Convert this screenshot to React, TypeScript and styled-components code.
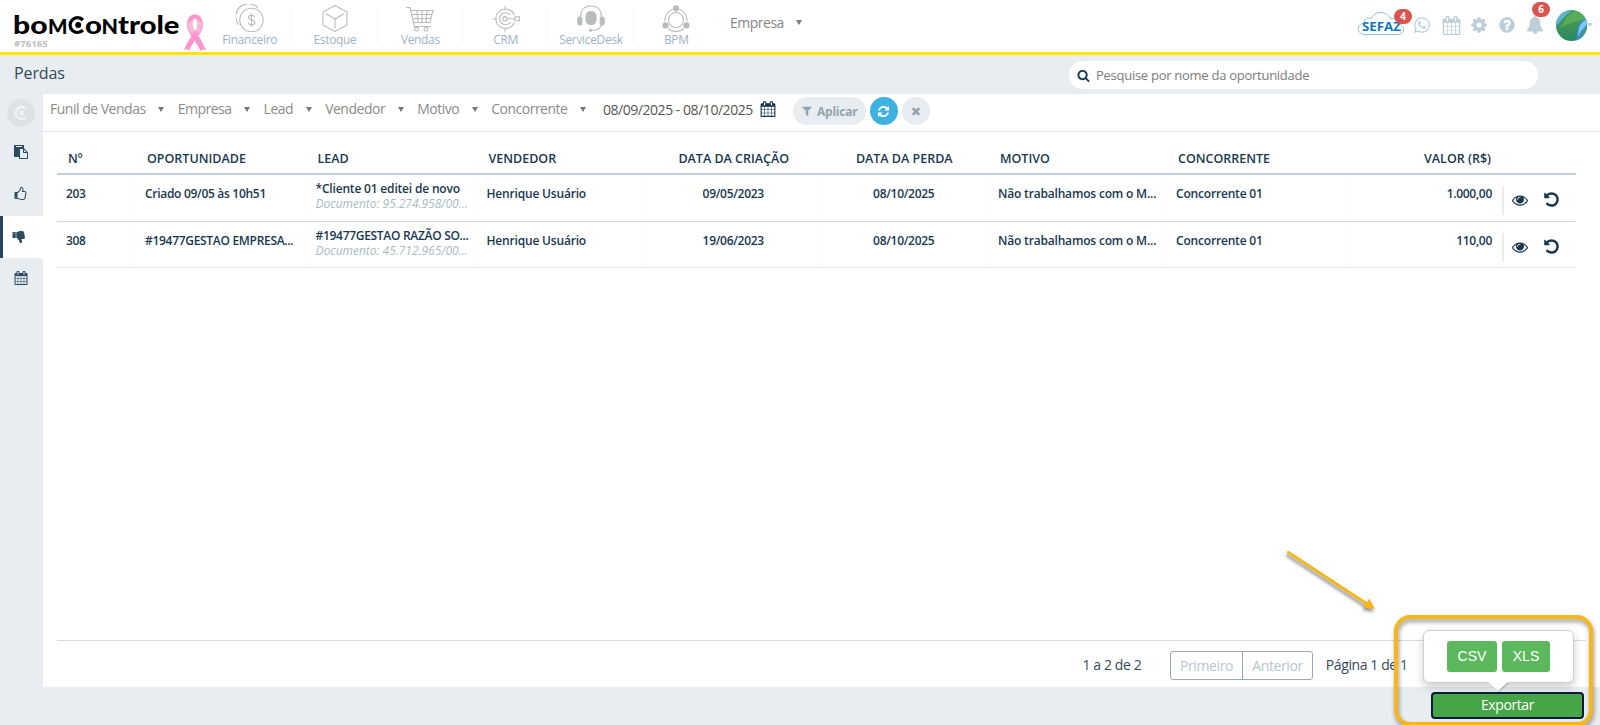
import React from 'react';
import styled, { createGlobalStyle } from 'styled-components';
import { FaWhatsapp } from 'react-icons/fa';

const GlobalStyle = createGlobalStyle`
  *, *::before, *::after { box-sizing: border-box; }
  html, body { margin: 0; padding: 0; }
  body {
    width: 1600px; height: 725px; overflow: hidden;
    background: #e8edf1; color: #17384f;
    font-family: 'Open Sans', 'Noto Sans', sans-serif; font-size: 13px;
  }
  button { font-family: inherit; margin: 0; padding: 0; border: 0; background: none; }
`;

const paths = {
  calendar:
    'M192 1664h288v-288h-288v288zm352 0h320v-288h-320v288zm-352-352h288v-320h-288v320zm352 0h320v-320h-320v320zm-352-384h288v-288h-288v288zm736 736h320v-288h-320v288zm-384-736h320v-288h-320v288zm768 736h288v-288h-288v288zm-384-352h320v-320h-320v320zm-352-864v-288q0-13-9.5-22.5t-22.5-9.5h-64q-13 0-22.5 9.5t-9.5 22.5v288q0 13 9.5 22.5t22.5 9.5h64q13 0 22.5-9.5t9.5-22.5zm736 864h288v-320h-288v320zm-384-384h320v-288h-320v288zm384 0h288v-288h-288v288zm32-480v-288q0-13-9.5-22.5t-22.5-9.5h-64q-13 0-22.5 9.5t-9.5 22.5v288q0 13 9.5 22.5t22.5 9.5h64q13 0 22.5-9.5t9.5-22.5zm384-64v1280q0 52-38 90t-90 38h-1408q-52 0-90-38t-38-90v-1280q0-52 38-90t90-38h128v-96q0-66 47-113t113-47h64q66 0 113 47t47 113v96h384v-96q0-66 47-113t113-47h64q66 0 113 47t47 113v96h128q52 0 90 38t38 90z',
  eye: 'M1664 960q-152-236-381-353 61 104 61 225 0 185-131.5 316.5t-316.5 131.5-316.5-131.5-131.5-316.5q0-121 61-225-229 117-381 353 133 205 333.5 326.5t434.5 121.5 434.5-121.5 333.5-326.5zm-720-384q0-20-14-34t-34-14q-125 0-214.5 89.5t-89.5 214.5q0 20 14 34t34 14 34-14 14-34q0-86 61-147t147-61q20 0 34-14t14-34zm848 384q0 34-20 69-140 230-376.5 368.5t-499.5 138.5-499.5-139-376.5-368q-20-35-20-69t20-69q140-229 376.5-368t499.5-139 499.5 139 376.5 368q20 35 20 69z',
  undo: 'M1664 896q0 156-61 298t-164 245-245 164-298 61q-172 0-327-72.5t-264-204.5q-7-10-6.5-22.5t8.5-20.5l137-138q10-9 25-9 16 2 23 12 73 95 179 147t225 52q104 0 198.5-40.5t163.5-109.5 109.5-163.5 40.5-198.5-40.5-198.5-109.5-163.5-163.5-109.5-198.5-40.5q-98 0-188 35.5t-160 101.5l137 138q31 30 14 69-17 40-59 40h-448q-26 0-45-19t-19-45v-448q0-42 40-59 39-17 69 14l130 129q107-101 244.5-156.5t284.5-55.5q156 0 298 61t245 164 164 245 61 298z',
  refresh:
    'M1639 1056q0 5-1 7-64 268-268 434.5t-478 166.5q-146 0-282.5-55t-243.5-157l-129 129q-19 19-45 19t-45-19-19-45v-448q0-26 19-45t45-19h448q26 0 45 19t19 45-19 45l-137 137q71 66 161 102t187 36q134 0 250-65t186-179q11-17 53-117 8-23 30-23h192q13 0 22.5 9.5t9.5 22.5zm25-800v448q0 26-19 45t-45 19h-448q-26 0-45-19t-19-45 19-45l138-138q-148-137-349-137-134 0-250 65t-186 179q-11 17-53 117-8 23-30 23h-199q-13 0-22.5-9.5t-9.5-22.5v-7q65-268 270-434.5t480-166.5q146 0 284 55.5t245 156.5l130-129q19-19 45-19t45 19 19 45z',
  filter:
    'M1595 295q17 41-14 70l-493 493v742q0 42-39 59-13 5-25 5-27 0-45-19l-256-256q-19-19-19-45v-486l-493-493q-31-29-14-70 17-39 59-39h1280q42 0 59 39z',
  times:
    'M1490 1322q0 40-28 68l-136 136q-28 28-68 28t-68-28l-294-294-294 294q-28 28-68 28t-68-28l-136-136q-28-28-28-68t28-68l294-294-294-294q-28-28-28-68t28-68l136-136q28-28 68-28t68 28l294 294 294-294q28-28 68-28t68 28l136 136q28 28 28 68t-28 68l-294 294 294 294q28 28 28 68z',
  search:
    'M1216 832q0-185-131.5-316.5t-316.5-131.5-316.5 131.5-131.5 316.5 131.5 316.5 316.5 131.5 316.5-131.5 131.5-316.5zm512 832q0 52-38 90t-90 38q-54 0-90-38l-343-342q-179 124-399 124-143 0-273.5-55.5t-225-150-150-225-55.5-273.5 55.5-273.5 150-225 225-150 273.5-55.5 273.5 55.5 225 150 150 225 55.5 273.5q0 220-124 399l343 343q37 37 37 90z',
  cog: 'M1152 896q0-106-75-181t-181-75-181 75-75 181 75 181 181 75 181-75 75-181zm512-109v222q0 12-8 23t-20 13l-185 28q-19 54-39 91 35 50 107 138 10 12 10 25t-9 23q-27 37-99 108t-94 71q-12 0-26-9l-138-108q-44 23-91 38-16 136-29 186-7 28-36 28h-222q-14 0-24.5-8.5t-11.5-21.5l-28-184q-49-16-90-37l-141 107q-10 9-25 9-14 0-25-11-126-114-165-168-7-10-7-23 0-12 8-23 15-21 51-66.5t54-70.5q-27-50-41-99l-183-27q-13-2-21-12.5t-8-23.5v-222q0-12 8-23t19-13l186-28q14-46 39-92-40-57-107-138-10-12-10-24 0-10 9-23 26-36 98.5-107.5t94.5-71.5q13 0 26 10l138 107q44-23 91-38 16-136 29-186 7-28 36-28h222q14 0 24.5 8.5t11.5 21.5l28 184q49 16 90 37l142-107q9-9 24-9 13 0 25 10 129 119 165 170 7 8 7 22 0 12-8 23-15 21-51 66.5t-54 70.5q26 50 41 98l183 28q13 2 21 12.5t8 23.5z',
  question:
    'M1024 1376v-192q0-14-9-23t-23-9h-192q-14 0-23 9t-9 23v192q0 14 9 23t23 9h192q14 0 23-9t9-23zm256-672q0-88-55.5-163t-138.5-116-170-41q-243 0-371 213-15 24 8 42l132 100q7 6 19 6 16 0 25-12 53-68 86-92 34-24 86-24 48 0 85.5 26t37.5 59q0 38-20 61t-68 45q-63 28-115.5 86.5t-52.5 125.5v36q0 14 9 23t23 9h192q14 0 23-9t9-23q0-19 21.5-49.5t54.5-49.5q32-18 49-28.5t46-35 44.5-48 28-60.5 12.5-81zm384 192q0 209-103 385.5t-279.5 279.5-385.5 103-385.5-103-279.5-279.5-103-385.5 103-385.5 279.5-279.5 385.5-103 385.5 103 279.5 279.5 103 385.5z',
  bell: 'M912 1696q0-16-16-16-59 0-101.5-42.5t-42.5-101.5q0-16-16-16t-16 16q0 73 51.5 124.5t124.5 51.5q16 0 16-16zm816-288q0 52-38 90t-90 38h-448q0 106-75 181t-181 75-181-75-75-181h-448q-52 0-90-38t-38-90q50-42 91-88t85-119.5 74.5-158.5 50-206 19.5-260q0-152 117-282.5t307-158.5q-8-19-8-39 0-40 28-68t68-28 68 28 28 68q0 20-8 39 190 28 307 158.5t117 282.5q0 139 19.5 260t50 206 74.5 158.5 85 119.5 91 88z',
  paste:
    'M768 1664h896v-640h-416q-40 0-68-28t-28-68v-416h-384v1152zm256-1440v-64q0-13-9.5-22.5t-22.5-9.5h-704q-13 0-22.5 9.5t-9.5 22.5v64q0 13 9.5 22.5t22.5 9.5h704q13 0 22.5-9.5t9.5-22.5zm256 672h299l-299-299v299zm512 128v672q0 40-28 68t-68 28h-960q-40 0-68-28t-28-68v-160h-544q-40 0-68-28t-28-68v-1344q0-40 28-68t68-28h1088q40 0 68 28t28 68v328q21 13 36 28l408 408q28 28 48 76t20 88z',
  thumbsUp:
    'M320 1344q0-26-19-45t-45-19-45 19-19 45 19 45 45 19 45-19 19-45zm1152-576q0-51-39-89.5t-89-38.5h-352q0-58 48-159.5t48-160.5q0-98-32-145t-128-47q-26 26-38 85t-30.5 125.5-59.5 109.5q-22 23-77 91-4 5-23 30t-31.5 41-34.5 42.5-40 44-38.5 35.5-40 27-35.5 9h-32v640h32q13 0 31.5 3t33 6.5 38 11 35 11.5 35.5 12.5 29 10.5q211 73 342 73h121q192 0 192-167 0-26-5-56 30-16 47.5-52.5t17.5-73.5-18-69q53-50 53-119 0-25-10-55.5t-25-47.5q32-1 53.5-47t21.5-81zm128-1q0 89-49 163 9 33 9 69 0 77-38 144 3 21 3 43 0 101-60 178 1 139-85 219.5t-227 80.5h-129q-96 0-189.5-22.5t-216.5-65.5q-116-40-138-40h-288q-53 0-90.5-37.5t-37.5-90.5v-640q0-53 37.5-90.5t90.5-37.5h274q36-24 137-155 58-75 107-128 24-25 35.5-85.5t30.5-126.5 62-108q39-37 90-37 84 0 151 32.5t102 101.5 35 186q0 93-48 192h176q104 0 180 76t76 179z',
  thumbsDown:
    'M320 576q0 26-19 45t-45 19q-27 0-45.5-19t-18.5-45q0-27 18.5-45.5t45.5-18.5q26 0 45 18.5t19 45.5zm160 512v-640q0-26-19-45t-45-19h-288q-26 0-45 19t-19 45v640q0 26 19 45t45 19h288q26 0 45-19t19-45zm1129-149q55 61 55 149-1 78-57.5 135t-134.5 57h-277q4 14 8 24t11 22 10 18q18 37 27 57t19 58.5 10 76.5q0 24-.5 39t-5 45-12 50-24 45-40 40.5-60 26-82.5 10.5q-26 0-45-19-20-20-34-50t-19.5-52-12.5-61q-9-42-13.5-60.5t-17.5-48.5-31-48q-33-33-101-120-49-64-101-121t-76-59q-25-2-43-20.5t-18-43.5v-641q0-26 19-44.5t45-19.5q35-1 158-44 77-26 120.5-39.5t121.5-29 144-15.5h129q133 2 197 78 58 69 49 181 39 37 54 94 17 61 0 117 46 61 43 137 0 32-15 76z',
};

const IconSvg = styled.svg`
  display: block; flex: none; fill: currentColor; overflow: visible;
`;
const Icon = ({ name, size }: { name: keyof typeof paths; size: number }) => (
  <IconSvg width={size} height={size} viewBox="0 0 1792 1792">
    <path d={paths[name]} />
  </IconSvg>
);

const Page = styled.div`
  position: relative; display: flex; flex-direction: column;
  width: 1600px; height: 725px; overflow: hidden;
`;

/* ---------- top bar ---------- */
const TopBar = styled.header`
  display: flex; align-items: flex-start; height: 55px; flex: none;
  background: #fff; border-bottom: 3px solid #ffe600;
`;
const Brand = styled.div`
  width: 207px; height: 52px; display: flex; align-items: flex-end;
`;
const BrandColumn = styled.div`
  display: flex; flex-direction: column; height: 52px; padding: 6px 0 0 11px; width: 183px; flex: none;
`;
const AccountId = styled.span`
  font-size: 9.5px; line-height: 12px; font-weight: 700; color: #bdbdbd;
  letter-spacing: 0.1px; padding-left: 3px; margin-top: -5px;
`;
const Modules = styled.nav`display: flex; height: 52px;`;
const Module = styled.a`
  width: 85.33px; display: flex; flex-direction: column; align-items: center;
  padding-top: 4px; position: relative; color: #9fb4c2;
  font-size: 12px; line-height: 15px; letter-spacing: -0.33px; white-space: nowrap;
  &:not(:last-child)::after {
    content: ''; position: absolute; right: 0; top: 8px; width: 1px; height: 36px; background: #f4f6f7;
  }
  svg { fill: none; stroke: #b9bcbe; stroke-width: 1.1; }
`;
const CompanyPicker = styled.div`
  display: flex; align-items: center; gap: 12.5px; margin: 12px 0 0 11px; height: 20px;
  color: #868686; font-size: 14px; letter-spacing: -0.49px;
`;
const Caret = styled.i<{ $light?: boolean }>`
  display: block; flex: none; width: 0; height: 0; margin-left: ${p => (p.$light ? -3 : 0)}px;
  border: 3px solid transparent; border-bottom: 0; border-top: ${p => (p.$light ? '4px solid #c3d3dc' : '5px solid #777')};
`;
const Tools = styled.div`
  display: flex; align-items: center; margin-left: auto; height: 50px; color: #bccfd8; padding-right: 7px;
`;
const Tool = styled.span<{ $w: number }>`
  position: relative; display: flex; justify-content: center; width: ${p => p.$w}px;
`;
const Badge = styled.b<{ $left: number; $top: number }>`
  position: absolute; left: ${p => p.$left}px; top: ${p => p.$top}px;
  min-width: 18px; height: 15px; border-radius: 8px; background: #d9534f; color: #fff;
  font-size: 10px; line-height: 15px; text-align: center;
`;

const Logo = () => (
  <svg width="172" height="37" viewBox="-2 -4 172 37" fontFamily="Lato, sans-serif" fontWeight="900">
    <g fontSize="25.5" fill="#000">
      <text x="0" y="23.8" textLength="34.5" lengthAdjust="spacingAndGlyphs">bo</text>
      <text x="35" y="23.8" fontSize="20" textLength="19.5" lengthAdjust="spacingAndGlyphs">M</text>
      <text x="72" y="23.8" textLength="17" lengthAdjust="spacingAndGlyphs">o</text>
      <text x="88.5" y="23.8" fontSize="20" textLength="16.5" lengthAdjust="spacingAndGlyphs">N</text>
      <text x="105" y="23.8" textLength="61.5" lengthAdjust="spacingAndGlyphs">trole</text>
    </g>
    <path d="M69.9 10.1 A7.4 7.4 0 1 0 69.9 20.1" fill="none" stroke="#000" strokeWidth="3.2" />
    <circle cx="65.2" cy="15.1" r="3" fill="#000" />
  </svg>
);

const Ribbon = () => (
  <svg width="24" height="38" viewBox="0 0 24 38">
    <path d="M4 11 C4 3 8 0.5 12 0.5 C16 0.5 20 3 20 11 C20 17 16 21 12 26 L5.5 37 L4.5 35 L1 36 C5 27 9 21 13.5 15 C15 12 15 5 12 4.5 C9 5 9 12 10.5 15 C15 21 19 28 23 36 L19.5 35 L18 37 L12 27 C8 21 4 17 4 11Z" fill="#ff94cf" />
    <path d="M12 27 L7.5 20.5 L11 16 L16.500 23.500 L22.500 36 L19.500 35 L18 37Z" fill="#ff94cf" />
    <path d="M4.5 9 C4.5 15 7 18 9 20 L11.5 16.5 C8.5 12 8.5 7 10.5 5Z M19.5 9 C19.5 15 17 18 15 20 L12.5 16.5 C15.5 12 15.5 7 13.5 5Z" fill="#f9b9dd" />
  </svg>
);

const FinanceIcon = () => (
  <svg width="28" height="28" viewBox="0 0 28 28">
    <circle cx="15.5" cy="16" r="11.7" /><path d="M3 21 A12 12 0 1 1 22 4" />
    <path d="M18.5 13 C18 11.5 17 11.3 15.5 11.3 C13.5 11.3 12.5 12.2 12.5 13.5 C12.5 16.8 18.8 14.8 18.8 18.4 C18.8 20 17.5 20.9 15.5 20.9 C13.7 20.9 12.5 20 12.3 18.5 M15.5 9.3 V23" />
  </svg>
);
const StockIcon = () => (
  <svg width="28" height="28" viewBox="0 0 28 28">
    <path d="M14 1.5 L26 8 V21 L14 27.5 L2 21 V8Z M5 9.8 L14 15 L23 9.8 M14 15 V24.5" />
  </svg>
);
const CartIcon = () => (
  <svg width="28" height="28" viewBox="0 0 28 28">
    <path d="M0 3.5 H4 L8.5 22.5 H25 M5 6.5 H27 L24 18.5 H7.5 M6 10.5 H26 M7 14.5 H25 M11 6.5 L12 18.5 M16 6.5 V18.5 M21 6.5 L20 18.5" />
    <circle cx="10.5" cy="25.3" r="1.9" /><circle cx="20" cy="25.3" r="1.9" />
  </svg>
);
const TargetIcon = () => (
  <svg width="28" height="28" viewBox="0 0 28 28">
    <path d="M22.5 11 A9.7 9.7 0 1 0 22.5 18.5 M18.5 11.3 A6 6 0 1 0 18.5 18.2 M13 2 V6 M13 23.5 V27.5 M0.5 14.8 H4.5" />
    <circle cx="13" cy="14.8" r="2.2" /><path d="M15 14.8 H23 M23 12.8 H28 L26.5 14.8 L28 16.8 H23Z" />
  </svg>
);
const HeadsetIcon = () => (
  <svg width="28" height="28" viewBox="0 0 28 28">
    <path d="M3.5 13 C3.5 5.5 8 2 14 2 C20 2 24.5 5.5 24.5 13 M24.5 20 C24 25 20 26 14 26.5" />
    <rect x="0.8" y="13" width="4" height="8" rx="1.8" fill="#b9bcbe" /><rect x="23.2" y="13" width="4" height="8" rx="1.8" fill="#b9bcbe" />
    <rect x="9" y="7.5" width="10" height="13" rx="4.7" fill="#b9bcbe" /><circle cx="13.5" cy="26.3" r="1" fill="#b9bcbe" />
  </svg>
);
const ProcessIcon = () => (
  <svg width="28" height="28" viewBox="0 0 28 28">
    <circle cx="14" cy="16" r="7.5" />
    <path d="M10.5 5.5 A11.5 11.5 0 0 0 3 17.5 M17.5 5.5 A11.5 11.5 0 0 1 25 17.5 M6 24.3 A11.5 11.5 0 0 0 22 24.3" />
    <circle cx="14" cy="4.3" r="2.6" fill="#b9bcbe" /><circle cx="3.5" cy="21.3" r="2.6" fill="#b9bcbe" /><circle cx="24.5" cy="21.3" r="2.6" fill="#b9bcbe" />
  </svg>
);
const modules: [string, React.ReactNode][] = [
  ['Financeiro', <FinanceIcon />], ['Estoque', <StockIcon />], ['Vendas', <CartIcon />],
  ['CRM', <TargetIcon />], ['ServiceDesk', <HeadsetIcon />], ['BPM', <ProcessIcon />],
];

const Sefaz = () => (
  <svg width="48" height="26" viewBox="0 0 48 26">
    <path d="M9 22.5 C3 22.5 1 19.5 1.5 16 C2 12.5 4.5 11.5 7 11.5 C7 7 11 4.5 14.5 6.5 C16.5 1.5 21 0 25 0.5 C30 1 32.5 4 33.5 7 C38 5.5 41.5 8.5 41.5 12 C45 12.5 47 15 46.5 18 C46 21 43.5 22.5 40 22.5Z" fill="#fff" stroke="#8fbfe0" strokeWidth="1" />
    <text x="5" y="19.3" textLength="39" lengthAdjust="spacingAndGlyphs" fontFamily="Open Sans, sans-serif" fontWeight="700" fontSize="11.5" fill="#1478bd">SEFAZ</text>
  </svg>
);
const Avatar = () => (
  <svg width="31" height="31" viewBox="0 0 31 31">
    <defs>
      <clipPath id="face"><circle cx="15.5" cy="15.5" r="15.5" /></clipPath>
      <linearGradient id="leaf" x1="0.3" y1="0" x2="0.4" y2="1"><stop offset="0.3" stopColor="#459a55" /><stop offset="1" stopColor="#2a8562" /></linearGradient>
    </defs>
    <g clipPath="url(#face)">
      <rect width="31" height="31" fill="url(#leaf)" />
      <path d="M12 2 C17 0 24 1 31 7 V12 C22 8 12 14 1 19 C7 16 10 8 12 2Z" fill="#5aab55" />
      <path d="M0 0 H17 C10 3 6 11 0 16Z" fill="#5cb5d8" />
      <path d="M1 15.5 C7 12 9 5 18 1" stroke="#2f8f6a" fill="none" />
      <path d="M27 9 C21 13 21 22 20 31 H31 V9Z" fill="#3a8fc0" />
      <path d="M31 9 C25 12 22 17 22 27 C24 21 28 18 31 14Z" fill="#7ccdf5" />
      <path d="M31 17 C27 19 25 25 25 31 H31Z" fill="#4d9f7a" />
    </g>
  </svg>
);

/* ---------- title bar ---------- */
const TitleBar = styled.div`
  display: flex; align-items: center; height: 39px; flex: none; padding: 0 62px 0 14px;
`;
const Title = styled.h1`
  margin: 0 auto 4px 0; font-weight: 400; font-size: 16px; line-height: 22px; color: #35495a;
  letter-spacing: -0.1px;
`;
const SearchBox = styled.label`
  display: flex; align-items: center; gap: 6px; width: 469px; height: 28px; padding-left: 8px;
  border-radius: 14px; background: #fff; color: #17384f; margin-top: 1px;
`;
const Placeholder = styled.span`color: #7c7c7c; font-size: 13px; letter-spacing: -0.27px;`;

/* ---------- body ---------- */
const Body = styled.div`display: flex; flex: none; height: 593px;`;
const SideNav = styled.nav`width: 43px; flex: none; display: flex; flex-direction: column;`;
const SideLogo = styled.div`
  display: flex; justify-content: center; align-items: center; width: 28px; height: 28px;
  margin: 5px 0 5px 7px; border-radius: 50%; background: #dde2e5;
`;
const SideItem = styled.a<{ $active?: boolean }>`
  display: flex; align-items: center; height: 42px; padding: 0 0 2px ${p => (p.$active ? 9 : 14)}px;
  color: #2a4a60; border-left: ${p => (p.$active ? '3px solid #24455e' : '0')};
  background: ${p => (p.$active ? '#fff' : 'transparent')};
`;
const Panel = styled.main`flex: 1; display: flex; flex-direction: column; background: #fff;`;
const FilterBar = styled.div`
  display: flex; align-items: center; height: 38px; flex: none; padding: 0 0 7px 7px;
  border-bottom: 1px solid #dfe6ea;
`;
const Filter = styled.div`
  display: flex; align-items: center; gap: 12.5px; margin-right: 13.5px;
  color: #8c8c8c; font-size: 14px; line-height: 20px; letter-spacing: -0.49px; white-space: nowrap;
`;
const DateRange = styled.div`
  display: flex; align-items: center; gap: 7px; margin-left: 3.5px; color: #555;
  font-size: 14px; letter-spacing: -0.46px; white-space: nowrap;
  svg { color: #17384f; }
`;
const RoundButton = styled.button<{ $tone?: 'blue'; $wide?: boolean }>`
  display: flex; align-items: center; justify-content: center; gap: 4px; flex: none;
  width: ${p => (p.$wide ? 73 : 28)}px; height: 28px; border-radius: 14px; margin-right: 4px;
  background: ${p => (p.$tone ? '#3eb1e0' : '#e7edf0')}; color: ${p => (p.$tone ? '#fff' : '#93a3b1')};
  font-size: 12px; font-weight: 700; letter-spacing: -0.2px;
`;
const Actions = styled.div`display: flex; margin: 4px 0 0 17px;`;

const Table = styled.div`margin: 19px 24px 0 14px; width: 1519px;`;
const Row = styled.div<{ $head?: boolean; $h: number; $last?: boolean }>`
  display: grid; grid-template-columns: 79px 170.5px 171px 170.5px 170.5px 170.5px 178px 178px 156px 75px;
  height: ${p => p.$h}px;
  border-bottom: ${p => (p.$head ? '2px solid #c2d1d9' : p.$last ? '1px solid #dfe8ec' : '1px solid #c9d8df')};
  color: #17384f; font-weight: 600; font-size: ${p => (p.$head ? 12.5 : 12)}px;
`;
const Cell = styled.div<{ $align?: string; $head?: boolean; $tight?: boolean }>`
  text-align: ${p => p.$align || 'left'}; line-height: 16px; white-space: nowrap; overflow: hidden;
  padding: ${p => (p.$head ? '0 10px 0 11px' : '11px 8px 0 9px')};
  border-right: ${p => (p.$head ? '0' : '1px dotted #f6f8f9')};
  letter-spacing: ${p => (p.$head ? 0 : p.$tight ? -0.3 : -0.18)}px;
`;
const LeadCell = styled(Cell)`padding-top: 6px;`;
const Doc = styled.div`
  font-weight: 400; font-style: italic; color: #a9bbc5; line-height: 15px; letter-spacing: -0.02px;
  margin-top: -1px;
`;
const RowActions = styled.div`
  display: flex; align-items: center; gap: 15px; height: 29px; margin: 11px 0 0 1px;
  padding: 0 0 2px 8px; border-left: 2px solid #e8edf1; color: #17384f;
`;

const Footer = styled.div`
  display: flex; align-items: center; height: 47px; margin: auto 14px 0 14px; padding-left: 1025.5px;
  border-top: 1px solid #dadada; font-size: 14px; color: #35495a; white-space: nowrap; letter-spacing: -0.4px;
`;
const Pager = styled.div`
  display: flex; width: 143px; height: 29px; margin: 3px 13px 0 28.5px; flex: none;
  border: 1px solid #9ba9b4; border-radius: 3px;
`;
const PageButton = styled.button<{ $w: number }>`
  width: ${p => p.$w}px; color: #b4c7d1; font-size: 14px; letter-spacing: -0.4px;
  & + & { border-left: 1px solid #9ba9b4; }
`;
const BottomBar = styled.div`display: flex; justify-content: flex-end; padding: 5px 16px 0 0; height: 38px;`;
const ExportWrap = styled.div`position: relative; width: 153px; height: 27px;`;
const ExportButton = styled.button`
  display: block; width: 153px; height: 27px; padding-bottom: 1px; border: 2px solid #0b1a3a; border-radius: 4px;
  background: #46a546; color: #fff; font-size: 14px; line-height: 20px; letter-spacing: -0.4px;
`;
const Popover = styled.div`
  position: absolute; left: -8px; bottom: 36px; width: 151px; height: 53px; display: flex;
  justify-content: center; align-items: center; gap: 5px; background: #fff;
  border: 1px solid #d0d0d0; border-radius: 6px; box-shadow: 0 4px 8px rgba(0, 0, 0, 0.2);
  &::after {
    content: ''; position: absolute; left: 64px; top: 100%; border: 10px solid transparent;
    border-bottom: 0; border-top: 9px solid #fff; filter: drop-shadow(1px 1px 0 rgba(0,0,0,.2));
  }
`;
const FormatButton = styled.button<{ $w: number }>`
  width: ${p => p.$w}px; height: 31px; padding-bottom: 1px; border-radius: 3px; background: #5cb85c; color: #fff;
  font-family: 'Liberation Sans', sans-serif; font-size: 14px;
`;
const Callout = styled.div`
  position: absolute; left: 1394px; top: 615px; width: 199px; height: 111px;
  border: 4px solid #f6b71d; border-radius: 16px; filter: drop-shadow(1px 3px 2px rgba(0,0,0,.4));
`;
const Pointer = styled.svg`
  position: absolute; left: 1280px; top: 544px; filter: drop-shadow(-1px 3px 1.5px rgba(0,0,0,.4));
`;

const headers: [string, string?][] = [
  ['Nº'], ['OPORTUNIDADE'], ['LEAD'], ['VENDEDOR'], ['DATA DA CRIAÇÃO', 'center'],
  ['DATA DA PERDA', 'center'], ['MOTIVO'], ['CONCORRENTE'], ['VALOR (R$)', 'right'], [''],
];
const rows = [
  { n: '203', opp: 'Criado 09/05 às 10h51', lead: '*Cliente 01 editei de novo', doc: 'Documento: 95.274.958/00...', created: '09/05/2023', value: '1.000,00' },
  { n: '308', opp: '#19477GESTAO EMPRESA...', lead: '#19477GESTAO RAZÃO SO...', doc: 'Documento: 45.712.965/00...', created: '19/06/2023', value: '110,00' },
];

export default function App() {
  return (
    <Page>
      <GlobalStyle />
      <TopBar>
        <Brand>
          <BrandColumn><Logo /><AccountId>#76165</AccountId></BrandColumn>
          <Ribbon />
        </Brand>
        <Modules>
          {modules.map(([label, icon]) => <Module key={label}>{icon}<span>{label}</span></Module>)}
        </Modules>
        <CompanyPicker>Empresa<Caret /></CompanyPicker>
        <Tools>
          <Tool $w={48}><Sefaz /><Badge $left={37} $top={-3}>4</Badge></Tool>
          <Tool $w={34}><FaWhatsapp size={18} /></Tool>
          <Tool $w={24}><Icon name="calendar" size={19} /></Tool>
          <Tool $w={32}><Icon name="cog" size={18} /></Tool>
          <Tool $w={23}><Icon name="question" size={18} /></Tool>
          <Tool $w={34}><Icon name="bell" size={18} /><Badge $left={14} $top={-14}>6</Badge></Tool>
          <Tool $w={38}><Avatar /></Tool>
          <Caret $light />
        </Tools>
      </TopBar>
      <TitleBar>
        <Title>Perdas</Title>
        <SearchBox><Icon name="search" size={13} /><Placeholder>Pesquise por nome da oportunidade</Placeholder></SearchBox>
      </TitleBar>
      <Body>
        <SideNav>
          <SideLogo>
            <svg width="16" height="16" viewBox="0 0 16 16" fill="none" stroke="#f0f3f5" strokeWidth="2.5">
              <path d="M12.5 3.5 A6 6 0 1 0 12.5 12.5" /><circle cx="8.8" cy="8" r="1.2" />
            </svg>
          </SideLogo>
          <SideItem><Icon name="paste" size={14} /></SideItem>
          <SideItem><Icon name="thumbsUp" size={14} /></SideItem>
          <SideItem $active><Icon name="thumbsDown" size={14} /></SideItem>
          <SideItem><Icon name="calendar" size={14} /></SideItem>
        </SideNav>
        <Panel>
          <FilterBar>
            {['Funil de Vendas', 'Empresa', 'Lead', 'Vendedor', 'Motivo', 'Concorrente'].map(f => (
              <Filter key={f}>{f}<Caret /></Filter>
            ))}
            <DateRange>08/09/2025 - 08/10/2025<Icon name="calendar" size={16} /></DateRange>
            <Actions>
              <RoundButton $wide><Icon name="filter" size={12} />Aplicar</RoundButton>
              <RoundButton $tone="blue"><Icon name="refresh" size={13} /></RoundButton>
              <RoundButton><Icon name="times" size={12} /></RoundButton>
            </Actions>
          </FilterBar>
          <Table>
            <Row $head $h={24}>
              {headers.map(([t, a], i) => <Cell key={i} $head $align={a}>{t}</Cell>)}
            </Row>
            {rows.map((r, i) => (
              <Row key={r.n} $h={i ? 46 : 47} $last={i === 1}>
                <Cell $tight>{r.n}</Cell>
                <Cell $tight>{r.opp}</Cell>
                <LeadCell $tight={i === 1}>{r.lead}<Doc>{r.doc}</Doc></LeadCell>
                <Cell>Henrique Usuário</Cell>
                <Cell $align="center" $tight>{r.created}</Cell>
                <Cell $align="center" $tight>08/10/2025</Cell>
                <Cell>Não trabalhamos com o M...</Cell>
                <Cell>Concorrente 01</Cell>
                <Cell $align="right" $tight>{r.value}</Cell>
                <RowActions><Icon name="eye" size={16} /><Icon name="undo" size={17} /></RowActions>
              </Row>
            ))}
          </Table>
          <Footer>
            <span>1 a 2 de 2</span>
            <Pager><PageButton $w={72}>Primeiro</PageButton><PageButton $w={70}>Anterior</PageButton></Pager>
            <span>Página 1 de 1</span>
          </Footer>
        </Panel>
      </Body>
      <BottomBar>
        <ExportWrap>
          <ExportButton>Exportar</ExportButton>
          <Popover><FormatButton $w={50}>CSV</FormatButton><FormatButton $w={48}>XLS</FormatButton></Popover>
        </ExportWrap>
      </BottomBar>
      <Callout />
      <Pointer width="110" height="80" viewBox="0 0 110 80">
        <path d="M8.5 8.5 L88 60.5" stroke="#f6b71d" strokeWidth="3.2" strokeLinecap="round" />
        <path d="M95 65 L83.500 63.5 L89.5 54.5Z" fill="#f6b71d" />
      </Pointer>
    </Page>
  );
}
